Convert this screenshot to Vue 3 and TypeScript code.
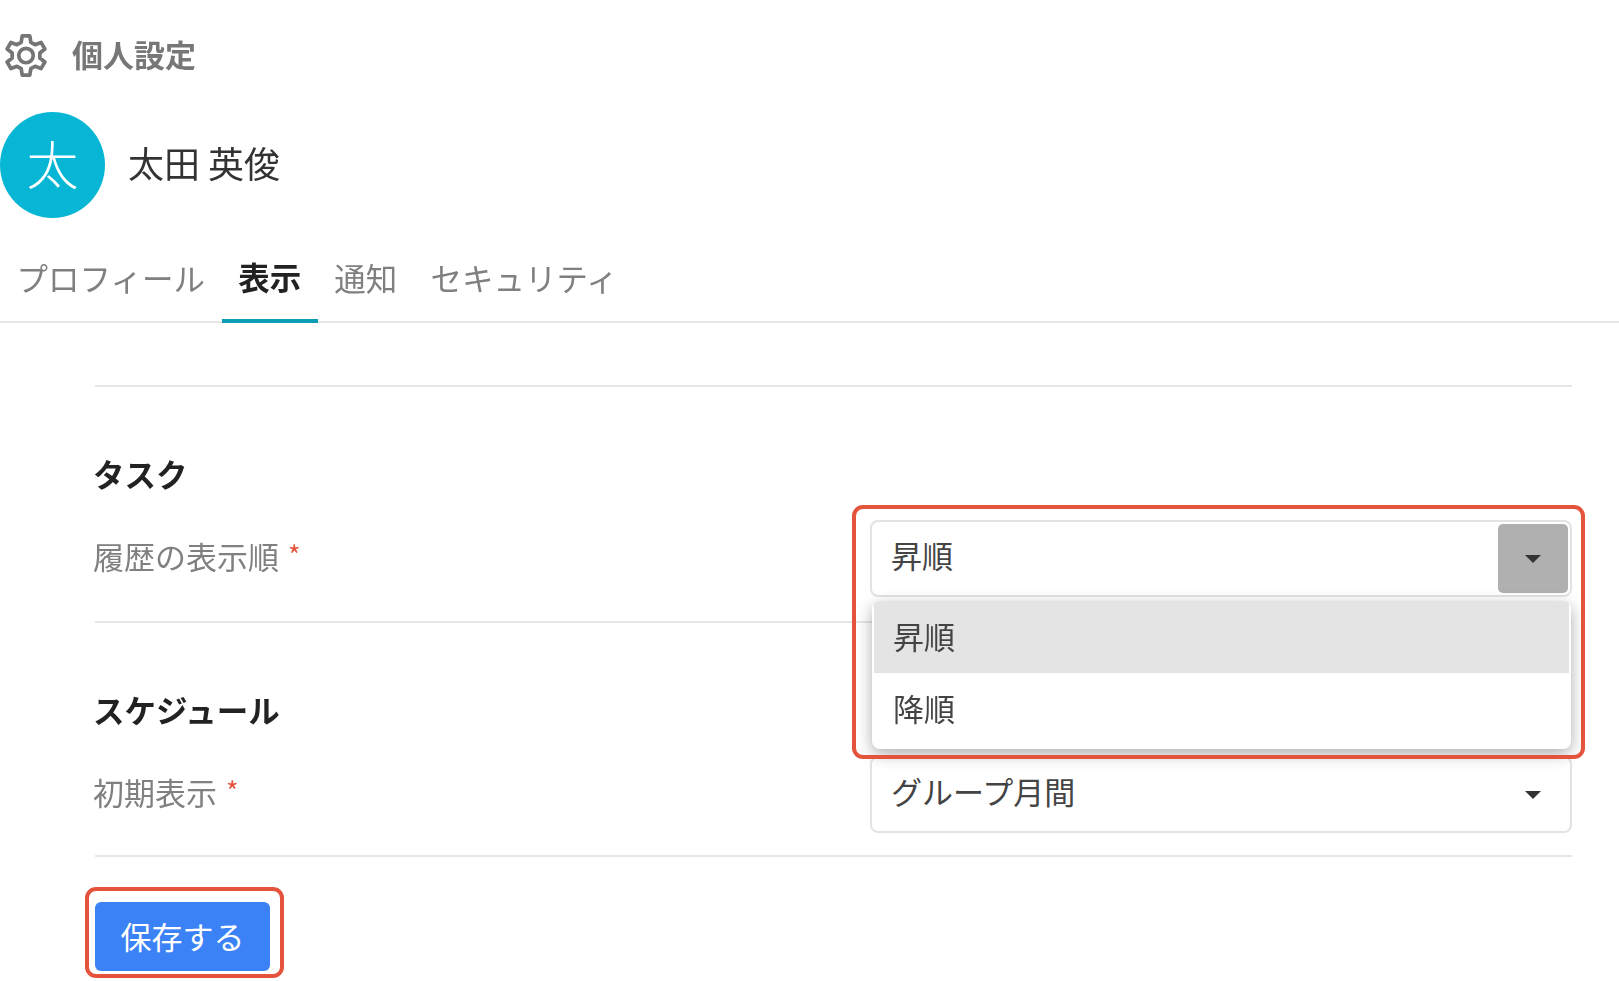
<script setup lang="ts">
import { ref } from 'vue';

const tabs = ['プロフィール', '表示', '通知', 'セキュリティ'];
const activeTab = ref('表示');
const orderOptions = ['昇順', '降順'];
</script>

<template>
  <div class="page">
    <header class="head">
      <svg class="gear" viewBox="1.5 1 21 22" fill="none" stroke="#757575" stroke-width="1.9" stroke-linejoin="round">
        <polygon points="9.54,5.23 10.05,1.99 13.95,1.99 14.46,5.23 16.63,6.48 19.7,5.31 21.64,8.68 19.09,10.75 19.09,13.25 21.64,15.32 19.7,18.69 16.63,17.52 14.46,18.77 13.95,22.01 10.05,22.01 9.54,18.77 7.37,17.52 4.3,18.69 2.36,15.32 4.91,13.25 4.91,10.75 2.36,8.68 4.3,5.31 7.37,6.48" />
        <circle cx="12" cy="12" r="3.7" />
      </svg>
      <h1 class="head-title">個人設定</h1>
    </header>

    <div class="user">
      <div class="avatar">太</div>
      <div class="user-name">太田 英俊</div>
    </div>

    <nav class="tabs">
      <div
        v-for="tab in tabs"
        :key="tab"
        class="tab"
        :class="{ active: tab === activeTab }"
      >
        {{ tab }}
      </div>
    </nav>

    <main class="content">
      <section class="section">
        <h2 class="section-title">タスク</h2>
        <div class="row">
          <label class="row-label">履歴の表示順 <span class="req">*</span></label>
          <div class="select open">
            <span class="select-value">昇順</span>
            <span class="caret-box"><i class="caret"></i></span>
            <ul class="menu">
              <li
                v-for="(option, index) in orderOptions"
                :key="option"
                class="menu-item"
                :class="{ selected: index === 0 }"
              >
                {{ option }}
              </li>
            </ul>
            <div class="mark mark-select"></div>
          </div>
        </div>
      </section>

      <section class="section">
        <h2 class="section-title">スケジュール</h2>
        <div class="row">
          <label class="row-label">初期表示 <span class="req">*</span></label>
          <div class="select">
            <span class="select-value">グループ月間</span>
            <span class="caret-box"><i class="caret"></i></span>
          </div>
        </div>
      </section>

      <div class="actions">
        <button class="save" type="button">
          保存する
          <span class="mark mark-save"></span>
        </button>
      </div>
    </main>
  </div>
</template>

<style>
html,
body {
  margin: 0;
  background: #fff;
}
</style>

<style scoped>
.page {
  width: 1619px;
  height: 981px;
  overflow: hidden;
  font-family: "Noto Sans CJK JP", "Noto Sans", sans-serif;
  filter: blur(0.6px);
  color: #444;
}

.head {
  display: flex;
  align-items: center;
  padding: 34px 0 0 5px;
  height: 43px;
}

.gear {
  width: 42px;
  height: 43px;
  display: block;
}

.head-title {
  margin: 0 0 5px 25px;
  font-size: 31px;
  font-weight: 700;
  color: #777;
  line-height: 43px;
}

.user {
  display: flex;
  align-items: center;
  margin-top: 35px;
  height: 106px;
}

.avatar {
  width: 105px;
  height: 106px;
  box-sizing: border-box;
  padding-bottom: 6px;
  border-radius: 50%;
  background: #07b6d5;
  color: #fff;
  font-size: 52px;
  font-weight: 300;
  display: flex;
  align-items: center;
  justify-content: center;
}

.user-name {
  margin-left: 23px;
  padding-bottom: 6px;
  font-size: 36px;
  color: #333;
}

.tabs {
  display: flex;
  height: 105px;
  box-sizing: border-box;
  align-items: flex-end;
  border-bottom: 2px solid #e6e6e6;
}

.tab {
  padding: 3px 16.6px 0;
  height: 70px;
  margin-bottom: -2px;
  box-sizing: border-box;
  font-size: 31.5px;
  line-height: 42px;
  color: #808080;
  border-bottom: 4px solid transparent;
}

.tab.active {
  padding-top: 2px;
  color: #222;
  font-weight: 700;
  border-bottom-color: #0d9db5;
}

.content {
  padding: 0 47px 0 95px;
  margin-top: 62px;
}

.section {
  border-top: 2px solid #e6e6e6;
  padding: 65px 0 24px;
}

.section:last-of-type {
  padding-bottom: 22px;
  border-bottom: 2px solid #e6e6e6;
}

.section-title {
  margin: 0 0 26px -2px;
  font-size: 31.5px;
  line-height: 42px;
  font-weight: 700;
  color: #222;
}

.row {
  display: flex;
  align-items: center;
}

.row-label {
  flex: 0 0 775px;
  margin-left: -2px;
  margin-right: 2px;
  padding-bottom: 7px;
  font-size: 31px;
  color: #808080;
}

.req {
  margin-left: 2px;
  color: #e5533d;
  font-size: 27px;
  vertical-align: 3px;
}

.select {
  position: relative;
  flex: 1;
  height: 77px;
  box-sizing: border-box;
  border: 2px solid #e3e3e3;
  border-radius: 8px;
  display: flex;
  align-items: center;
  padding-left: 19px;
  background: #fff;
}

.select-value {
  flex: 1;
  padding-bottom: 8px;
  font-size: 31px;
  color: #444;
}

.caret-box {
  width: 70px;
  height: 69px;
  margin-right: 2px;
  border-radius: 5px;
  display: flex;
  align-items: center;
  justify-content: center;
}

.select.open .caret-box {
  background: #b0b0b0;
}

.caret {
  display: block;
  width: 0;
  height: 0;
  border-left: 8px solid transparent;
  border-right: 8px solid transparent;
  border-top: 8px solid #333;
}

.menu {
  position: absolute;
  top: 79px;
  left: 0;
  right: -1px;
  z-index: 2;
  margin: 0;
  padding: 0 2px 4px;
  list-style: none;
  background: #fff;
  border-radius: 8px;
  box-shadow: 0 5px 16px rgba(0, 0, 0, 0.32);
  overflow: hidden;
}

.menu-item {
  height: 72px;
  padding-left: 19px;
  box-sizing: border-box;
  font-size: 31px;
  line-height: 70px;
  color: #444;
}

.menu-item.selected {
  background: #e4e4e4;
}

.mark {
  position: absolute;
  box-sizing: border-box;
  border: 4px solid #e5533d;
  border-radius: 11px;
  pointer-events: none;
  z-index: 3;
}

.mark-select {
  top: -17px;
  left: -20px;
  right: -15px;
  height: 254px;
}

.actions {
  padding-top: 45px;
}

.save {
  position: relative;
  display: block;
  width: 175px;
  height: 69px;
  padding: 0 0 3px;
  border: 0;
  border-radius: 6px;
  background: #3b82f6;
  color: #fff;
  font-family: inherit;
  font-size: 31px;
}

.mark-save {
  top: -15px;
  left: -10px;
  width: 199px;
  height: 91px;
}
</style>
